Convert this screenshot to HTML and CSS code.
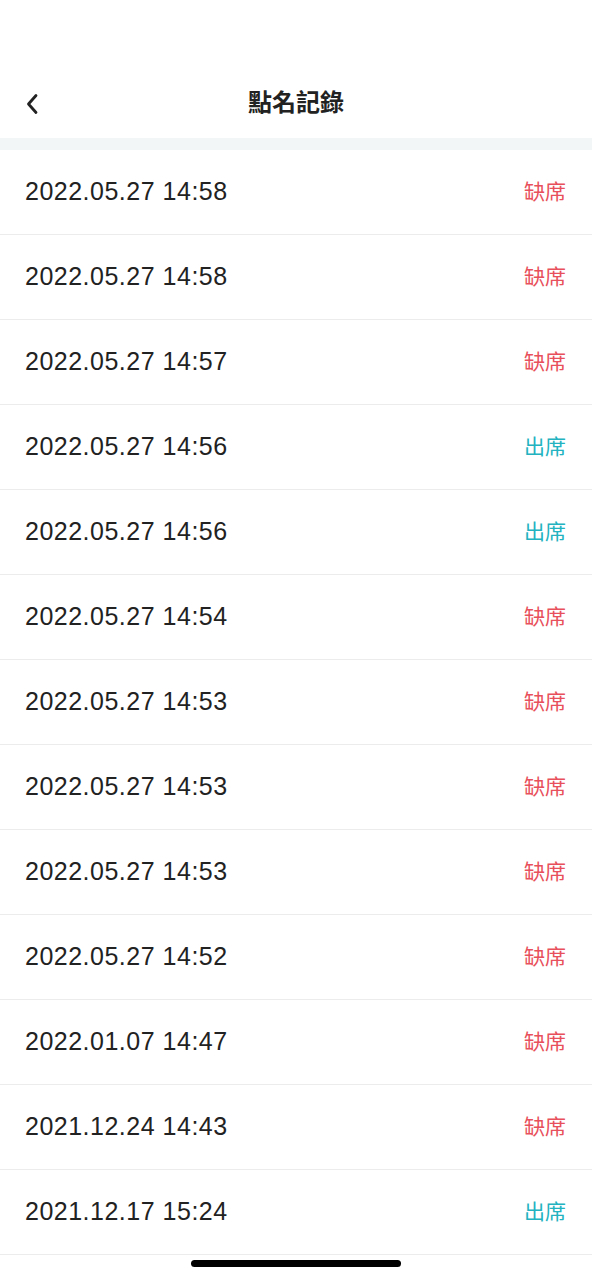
FILE: index.html
```html
<!DOCTYPE html>
<html lang="zh-Hant">
<head>
    <meta charset="UTF-8">
    <meta name="viewport" content="width=device-width, initial-scale=1.0">
    <title>點名記錄</title>
    <link rel="stylesheet" href="styles.css">
</head>
<body>
    <div class="page">
        <header class="nav">
            <button class="back" aria-label="返回">
                <svg width="14" height="22" viewBox="0 0 14 22">
                    <path d="M11 2.5 L3.5 11 L11 19.5" fill="none" stroke="#222" stroke-width="2.8" stroke-linecap="round" stroke-linejoin="round"/>
                </svg>
            </button>
            <h1 class="title">點名記錄</h1>
        </header>

        <div class="gap-band"></div>

        <ul class="records">
            <li class="record"><span class="time">2022.05.27 14:58</span><span class="status absent">缺席</span></li>
            <li class="record"><span class="time">2022.05.27 14:58</span><span class="status absent">缺席</span></li>
            <li class="record"><span class="time">2022.05.27 14:57</span><span class="status absent">缺席</span></li>
            <li class="record"><span class="time">2022.05.27 14:56</span><span class="status present">出席</span></li>
            <li class="record"><span class="time">2022.05.27 14:56</span><span class="status present">出席</span></li>
            <li class="record"><span class="time">2022.05.27 14:54</span><span class="status absent">缺席</span></li>
            <li class="record"><span class="time">2022.05.27 14:53</span><span class="status absent">缺席</span></li>
            <li class="record"><span class="time">2022.05.27 14:53</span><span class="status absent">缺席</span></li>
            <li class="record"><span class="time">2022.05.27 14:53</span><span class="status absent">缺席</span></li>
            <li class="record"><span class="time">2022.05.27 14:52</span><span class="status absent">缺席</span></li>
            <li class="record"><span class="time">2022.01.07 14:47</span><span class="status absent">缺席</span></li>
            <li class="record"><span class="time">2021.12.24 14:43</span><span class="status absent">缺席</span></li>
            <li class="record"><span class="time">2021.12.17 15:24</span><span class="status present">出席</span></li>
        </ul>

        <div class="home-indicator"></div>
    </div>
</body>
</html>
```

FILE: styles.css
```css
/* styles.css */
body {
    margin: 0;
    padding: 0;
    background-color: #fff;
    font-family: "Liberation Sans", "Noto Sans CJK TC", sans-serif;
    color: #222;
}

.page {
    position: relative;
    min-height: 1280px;
}

.nav {
    position: relative;
    display: flex;
    align-items: center;
    justify-content: center;
    height: 68px;
    padding-top: 70px;
}

.back {
    position: absolute;
    left: 25px;
    top: 93px;
    padding: 0;
    border: none;
    background: none;
    display: flex;
}

.title {
    margin: 0 0 8px;
    font-size: 24px;
    font-weight: bold;
    color: #222;
    font-family: "Noto Sans CJK TC", sans-serif;
}

.gap-band {
    height: 12px;
    background-color: #f2f6f7;
}

.records {
    list-style: none;
    margin: 0;
    padding: 0;
}

.record {
    display: flex;
    align-items: center;
    justify-content: space-between;
    height: 84px;
    padding: 0 26px 0 25px;
    border-bottom: 1px solid #ececec;
}

.time {
    font-size: 25px;
    letter-spacing: 0.5px;
    color: #222;
    padding-bottom: 2px;
}

.status {
    font-size: 21px;
    font-family: "Noto Sans CJK TC", sans-serif;
    padding-bottom: 5px;
}

.absent {
    color: #e8505b;
}

.present {
    color: #22b2c0;
}

.home-indicator {
    position: absolute;
    left: 191px;
    top: 1260px;
    width: 210px;
    height: 7px;
    border-radius: 4px;
    background-color: #000;
}
```
